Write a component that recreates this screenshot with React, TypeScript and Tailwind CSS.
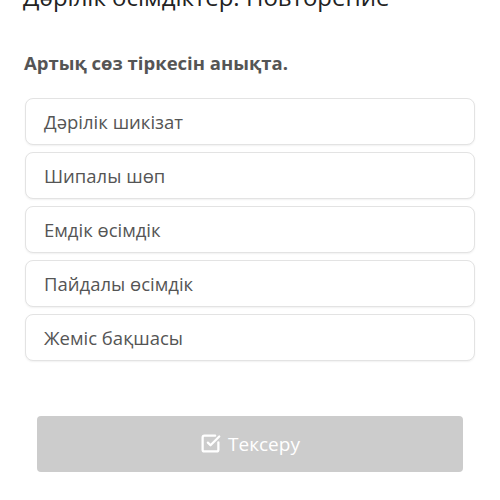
import { SquareCheckBig } from "lucide-react";

const options = [
  "Дәрілік шикізат",
  "Шипалы шөп",
  "Емдік өсімдік",
  "Пайдалы өсімдік",
  "Жеміс бақшасы",
];

export default function App() {
  return (
    <div
      className="w-[500px] h-[500px] overflow-hidden bg-white"
      style={{ fontFamily: '"Open Sans", "Noto Sans", sans-serif' }}
    >
      <h1 className="-mt-[18px] pl-[23px] text-[24px] leading-[30px] text-[#222]">
        Дәрілік өсімдіктер. Повторение
      </h1>

      <p className="mt-[39px] pl-[24px] text-[18.5px] leading-[24px] font-bold text-[#555]">
        Артық сөз тіркесін анықта.
      </p>

      <div className="mt-[23px] mx-[25px] flex flex-col gap-[7px]">
        {options.map((o) => (
          <div
            key={o}
            className="h-[47px] flex items-center px-[18px] rounded-lg border border-[#e3e3e3] bg-white shadow-[0_1px_2px_rgba(0,0,0,0.06)] text-[18.5px] text-[#555]"
          >
            {o}
          </div>
        ))}
      </div>

      <div className="mt-[55px] mx-[37px]">
        <button className="w-full h-[56px] rounded-[4px] bg-[#cccccc] flex items-center justify-center gap-[7px] text-white text-[19px]">
          <SquareCheckBig size={21} strokeWidth={2.6} className="-mt-[2px]" />
          <span>Тексеру</span>
        </button>
      </div>
    </div>
  );
}
